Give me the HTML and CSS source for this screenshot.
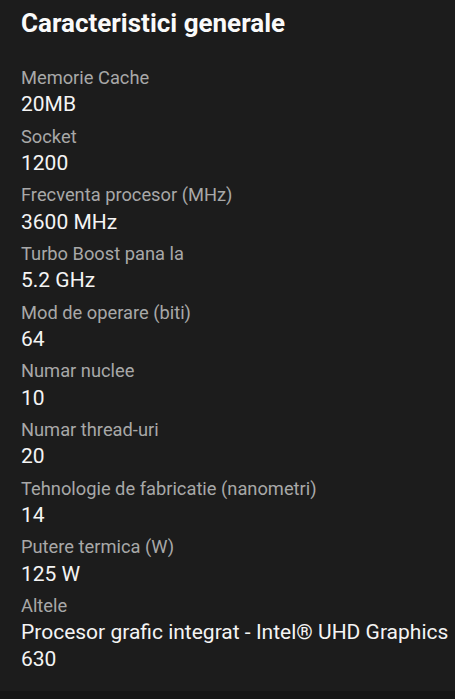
FILE: index.html
```html
<!DOCTYPE html>
<html lang="ro">
<head>
    <meta charset="UTF-8">
    <title>Caracteristici generale</title>
    <link rel="stylesheet" href="styles.css">
</head>
<body>

<div class="specs">
    <h2 class="title">Caracteristici generale</h2>

    <dl class="list">
        <div class="row">
            <dt>Memorie Cache</dt>
            <dd>20MB</dd>
        </div>
        <div class="row">
            <dt>Socket</dt>
            <dd>1200</dd>
        </div>
        <div class="row">
            <dt>Frecventa procesor (MHz)</dt>
            <dd>3600 MHz</dd>
        </div>
        <div class="row">
            <dt>Turbo Boost pana la</dt>
            <dd>5.2 GHz</dd>
        </div>
        <div class="row">
            <dt>Mod de operare (biti)</dt>
            <dd>64</dd>
        </div>
        <div class="row">
            <dt>Numar nuclee</dt>
            <dd>10</dd>
        </div>
        <div class="row">
            <dt>Numar thread-uri</dt>
            <dd>20</dd>
        </div>
        <div class="row">
            <dt>Tehnologie de fabricatie (nanometri)</dt>
            <dd>14</dd>
        </div>
        <div class="row">
            <dt>Putere termica (W)</dt>
            <dd>125 W</dd>
        </div>
        <div class="row">
            <dt>Altele</dt>
            <dd>Procesor grafic integrat - Intel® UHD Graphics 630</dd>
        </div>
    </dl>
</div>

<div class="bottom"></div>

</body>
</html>
```

FILE: styles.css
```css
* {
    padding: 0;
    margin: 0;
}
html, body {
    height: 100%;
}
body {
    display: flex;
    flex-direction: column;
    background: #1c1c1c;
    color: #fff;
    font-family: Roboto, "Noto Sans", sans-serif;
}
.specs {
    flex: 1;
    padding: 5px 6px 0 21px;
}
.title {
    font-size: 26px;
    font-weight: 700;
    line-height: 36px;
    color: #fafafa;
}
.list {
    margin-top: 24px;
}
.row {
    display: flex;
    flex-direction: column;
    margin-bottom: 4.7px;
}
dt {
    font-size: 18.3px;
    line-height: 25px;
    color: #a8a8a8;
}
dd {
    font-size: 21px;
    line-height: 27px;
    padding: 1.3px 0 0.7px;
    color: #f4f4f4;
}
.bottom {
    height: 8px;
    background: #161616;
}
```
